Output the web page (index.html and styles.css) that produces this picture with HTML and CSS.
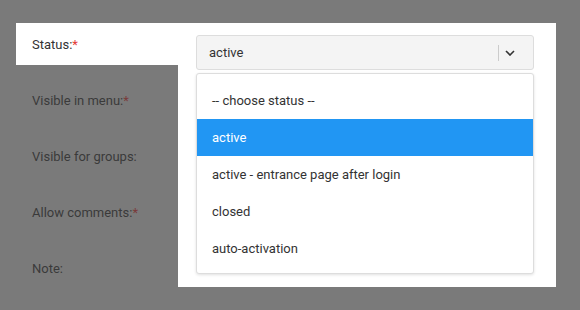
FILE: index.html
```html
<!DOCTYPE html>
<html lang="en">
<head>
    <meta charset="UTF-8">
    <meta name="viewport" content="width=device-width, initial-scale=1.0">
    <title>Page Settings</title>
    <link rel="stylesheet" href="styles.css">
</head>
<body>
    <div class="form">
        <div class="labels">
            <div class="label focus">Status:<span class="req">*</span></div>
            <div class="label">Visible in menu:<span class="req">*</span></div>
            <div class="label">Visible for groups:</div>
            <div class="label">Allow comments:<span class="req">*</span></div>
            <div class="label">Note:</div>
        </div>
        <div class="panel">
            <div class="select">
                <span class="value">active</span>
                <span class="sep"></span>
                <svg class="chevron" width="10" height="6" viewBox="0 0 10 6">
                    <path d="M1 1 L5 5 L9 1" fill="none" stroke="#333" stroke-width="1.6"/>
                </svg>
            </div>
            <ul class="options">
                <li>-- choose status --</li>
                <li class="selected">active</li>
                <li>active - entrance page after login</li>
                <li>closed</li>
                <li>auto-activation</li>
            </ul>
        </div>
    </div>
</body>
</html>
```

FILE: styles.css
```css
body { margin: 0; background: #7a7a7a; font-family: Roboto, "Noto Sans", Arial, sans-serif; font-size: 13px; color: #333; }
.form { display: flex; margin: 23px 0 0 16px; }
.labels { width: 162px; }
.label { height: 56px; padding: 14px 0 0 16px; box-sizing: border-box; color: #3a3a3a; line-height: 16px; }
.label .req { color: #7a3a3a; }
.label.focus { height: 42px; margin-bottom: 14px; background: #fff; color: #333; }
.label.focus .req { color: #e53935; }
.panel { width: 378px; height: 264px; box-sizing: border-box; background: #fff; padding: 12px 22px 0 18px; }
.select { height: 35px; box-sizing: border-box; border: 1px solid #ddd; border-radius: 3px; background: #f4f4f4; display: flex; align-items: center; padding: 0 18px 0 12px; }
.value { flex: 1; }
.sep { width: 1px; height: 16px; background: #ccc; margin-right: 6px; }
.chevron { display: block; }
.options { list-style: none; margin: 3px 0 0; padding: 8px 0 6px; border: 1px solid #ddd; border-radius: 3px; background: #fff; box-shadow: 0 1px 3px rgba(0,0,0,0.12); }
.options li { height: 37px; line-height: 37px; padding-left: 15px; }
.options li.selected { background: #2196f3; color: #fff; }
```
